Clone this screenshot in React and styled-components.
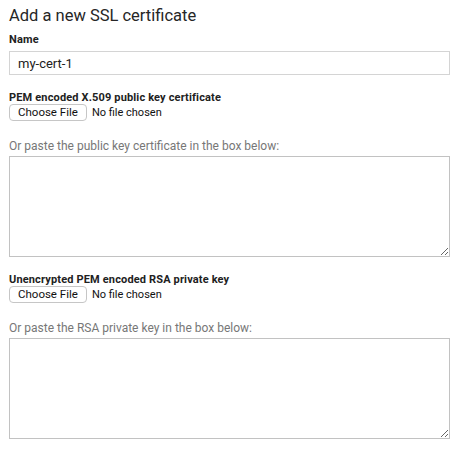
import React from "react";
import styled, { createGlobalStyle } from "styled-components";

const GlobalStyle = createGlobalStyle`
  body {
    margin: 0;
    background: #ffffff;
    font-family: Roboto, "Liberation Sans", Arial, sans-serif;
    color: #212121;
  }
`;

const Form = styled.form`
  display: flex;
  flex-direction: column;
  padding: 6px 15px 0 9px;
  width: 441px;
`;

const Title = styled.h2`
  margin: 0 0 8px;
  font-size: 16.5px;
  font-weight: 400;
  line-height: 20px;
  color: #262626;
`;

const Label = styled.label`
  display: block;
  font-size: 11px;
  font-weight: 700;
  letter-spacing: 0.15px;
  line-height: 12px;
  color: #212121;
  margin-bottom: ${({ gap }) => gap || 0}px;
`;

const TextInput = styled.input`
  box-sizing: border-box;
  width: 441px;
  height: 24px;
  border: 1px solid #d4d4d4;
  border-radius: 0;
  padding: 0 8px;
  font-family: inherit;
  font-size: 13px;
  color: #212121;
  outline: none;
  margin: 0 0 17px;
`;

const FileRow = styled.div`
  display: flex;
  align-items: center;
  gap: 5px;
`;

const FileButton = styled.button`
  box-sizing: border-box;
  height: 17px;
  padding: 0 8px;
  border: 1px solid #c6c6c6;
  border-radius: 4px;
  background: #ffffff;
  font-family: inherit;
  font-size: 11.5px;
  color: #111111;
  line-height: 15px;
`;

const FileStatus = styled.span`
  font-size: 11px;
  color: #111111;
`;

const Hint = styled.p`
  margin: 18px 0 3px;
  font-size: 12px;
  line-height: 14px;
  color: #777777;
`;

const Area = styled.textarea`
  display: block;
  box-sizing: border-box;
  width: 441px;
  height: 101px;
  border: 1px solid #c2c2c2;
  border-radius: 0;
  padding: 4px;
  resize: both;
  margin: 0 0 ${({ bottom }) => bottom || 0}px;
  font-family: inherit;
  outline: none;
`;

const Section = styled.div`
  display: flex;
  flex-direction: column;
`;

function KeyUpload({ label, hint, bottom }) {
  return (
    <Section>
      <Label>{label}</Label>
      <FileRow>
        <FileButton type="button">Choose File</FileButton>
        <FileStatus>No file chosen</FileStatus>
      </FileRow>
      <Hint>{hint}</Hint>
      <Area bottom={bottom} />
    </Section>
  );
}

export default function App() {
  return (
    <>
      <GlobalStyle />
      <Form onSubmit={(e) => e.preventDefault()}>
        <Title>Add a new SSL certificate</Title>
        <Label gap={5}>Name</Label>
        <TextInput defaultValue="my-cert-1" />
        <KeyUpload
          label="PEM encoded X.509 public key certificate"
          hint="Or paste the public key certificate in the box below:"
          bottom={17}
        />
        <KeyUpload
          label="Unencrypted PEM encoded RSA private key"
          hint="Or paste the RSA private key in the box below:"
        />
      </Form>
    </>
  );
}
